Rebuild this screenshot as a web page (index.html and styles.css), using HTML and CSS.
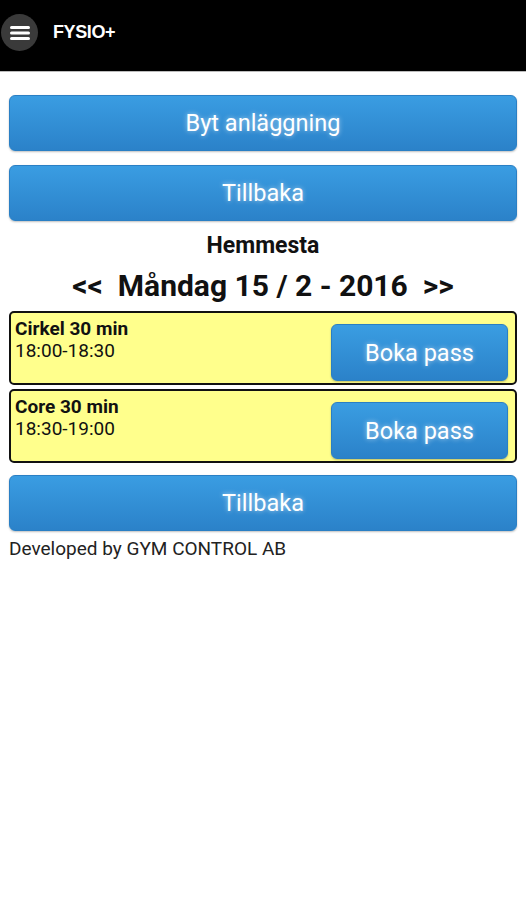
FILE: index.html
```html
<!DOCTYPE html>
<html>
  <head>
    <title>FYSIO+</title>
    <meta charset="utf-8" />
    <meta name="viewport" content="width=device-width, initial-scale=1.0" />
    <link rel="stylesheet" href="styles.css">
  </head>

  <body>
    <div class="topbar">
      <div class="menu-btn">
        <svg width="20" height="16" viewBox="0 0 20 16">
          <rect x="0" y="1" width="20" height="3" rx="1.5" fill="#fff" />
          <rect x="0" y="6.5" width="20" height="3" rx="1.5" fill="#fff" />
          <rect x="0" y="12" width="20" height="3" rx="1.5" fill="#fff" />
        </svg>
      </div>
      <span class="brand">FYSIO+</span>
    </div>

    <div class="content">
      <button class="btn">Byt anläggning</button>
      <button class="btn">Tillbaka</button>

      <div class="place">Hemmesta</div>
      <div class="date">&lt;&lt;&nbsp; Måndag 15 / 2 - 2016 &nbsp;&gt;&gt;</div>

      <div class="session">
        <div class="session-info">
          <div class="session-name">Cirkel 30 min</div>
          <div class="session-time">18:00-18:30</div>
        </div>
        <button class="btn btn-book">Boka pass</button>
      </div>
      <div class="session">
        <div class="session-info">
          <div class="session-name">Core 30 min</div>
          <div class="session-time">18:30-19:00</div>
        </div>
        <button class="btn btn-book">Boka pass</button>
      </div>

      <button class="btn btn-back">Tillbaka</button>
      <div class="footer">Developed by GYM CONTROL AB</div>
    </div>
  </body>
</html>
```

FILE: styles.css
```css
body {
  margin: 0;
  font-family: Roboto, Arial, sans-serif;
  background-color: #fff;
  color: #111;
}

.topbar {
  height: 72px;
  background-color: #000;
  border-bottom: 1px solid #bbb;
  display: flex;
  align-items: flex-start;
  padding-top: 14px;
  box-sizing: border-box;
}

.menu-btn {
  width: 37px;
  height: 37px;
  margin-left: 1px;
  border-radius: 50%;
  background-color: #3a3a3a;
  display: flex;
  align-items: center;
  justify-content: center;
}

.brand {
  margin-left: 15px;
  margin-top: 8px;
  color: #fff;
  font-family: "Liberation Sans", Arial, sans-serif;
  font-weight: bold;
  font-size: 18px;
  letter-spacing: -0.4px;
}

.content {
  padding: 23px 9px 0 9px;
  display: flex;
  flex-direction: column;
}

.btn {
  display: block;
  width: 100%;
  height: 56px;
  border: 1px solid #2a7fc4;
  border-radius: 6px;
  background: linear-gradient(#3a9de2, #2b82c9);
  color: #fff;
  font-family: Roboto, Arial, sans-serif;
  font-size: 23.5px;
  text-shadow: 0 0 5px rgba(255, 255, 255, 0.6);
  box-shadow: 0 1px 2px rgba(0, 0, 0, 0.25);
  margin-bottom: 14px;
  padding: 0;
  cursor: pointer;
}

.place {
  text-align: center;
  font-weight: bold;
  font-size: 23px;
  line-height: 22px;
}

.date {
  text-align: center;
  font-weight: bold;
  font-size: 30px;
  line-height: 34px;
  margin-top: 12px;
  margin-bottom: 8px;
}

.session {
  display: flex;
  justify-content: space-between;
  height: 74px;
  box-sizing: border-box;
  background-color: #ffff8c;
  border: 2px solid #111;
  border-radius: 5px;
  padding: 0 7px 0 4px;
  margin-bottom: 4px;
}

.session-info {
  padding-top: 5px;
  font-size: 19px;
  line-height: 22px;
}

.session-name {
  font-weight: bold;
}

.btn-book {
  align-self: flex-end;
  width: 177px;
  height: 57px;
  margin: 0 0 2px 0;
}

.btn-back {
  margin-top: 8px;
  margin-bottom: 7px;
}

.footer {
  font-size: 19px;
  line-height: 22px;
  color: #222;
}
```
